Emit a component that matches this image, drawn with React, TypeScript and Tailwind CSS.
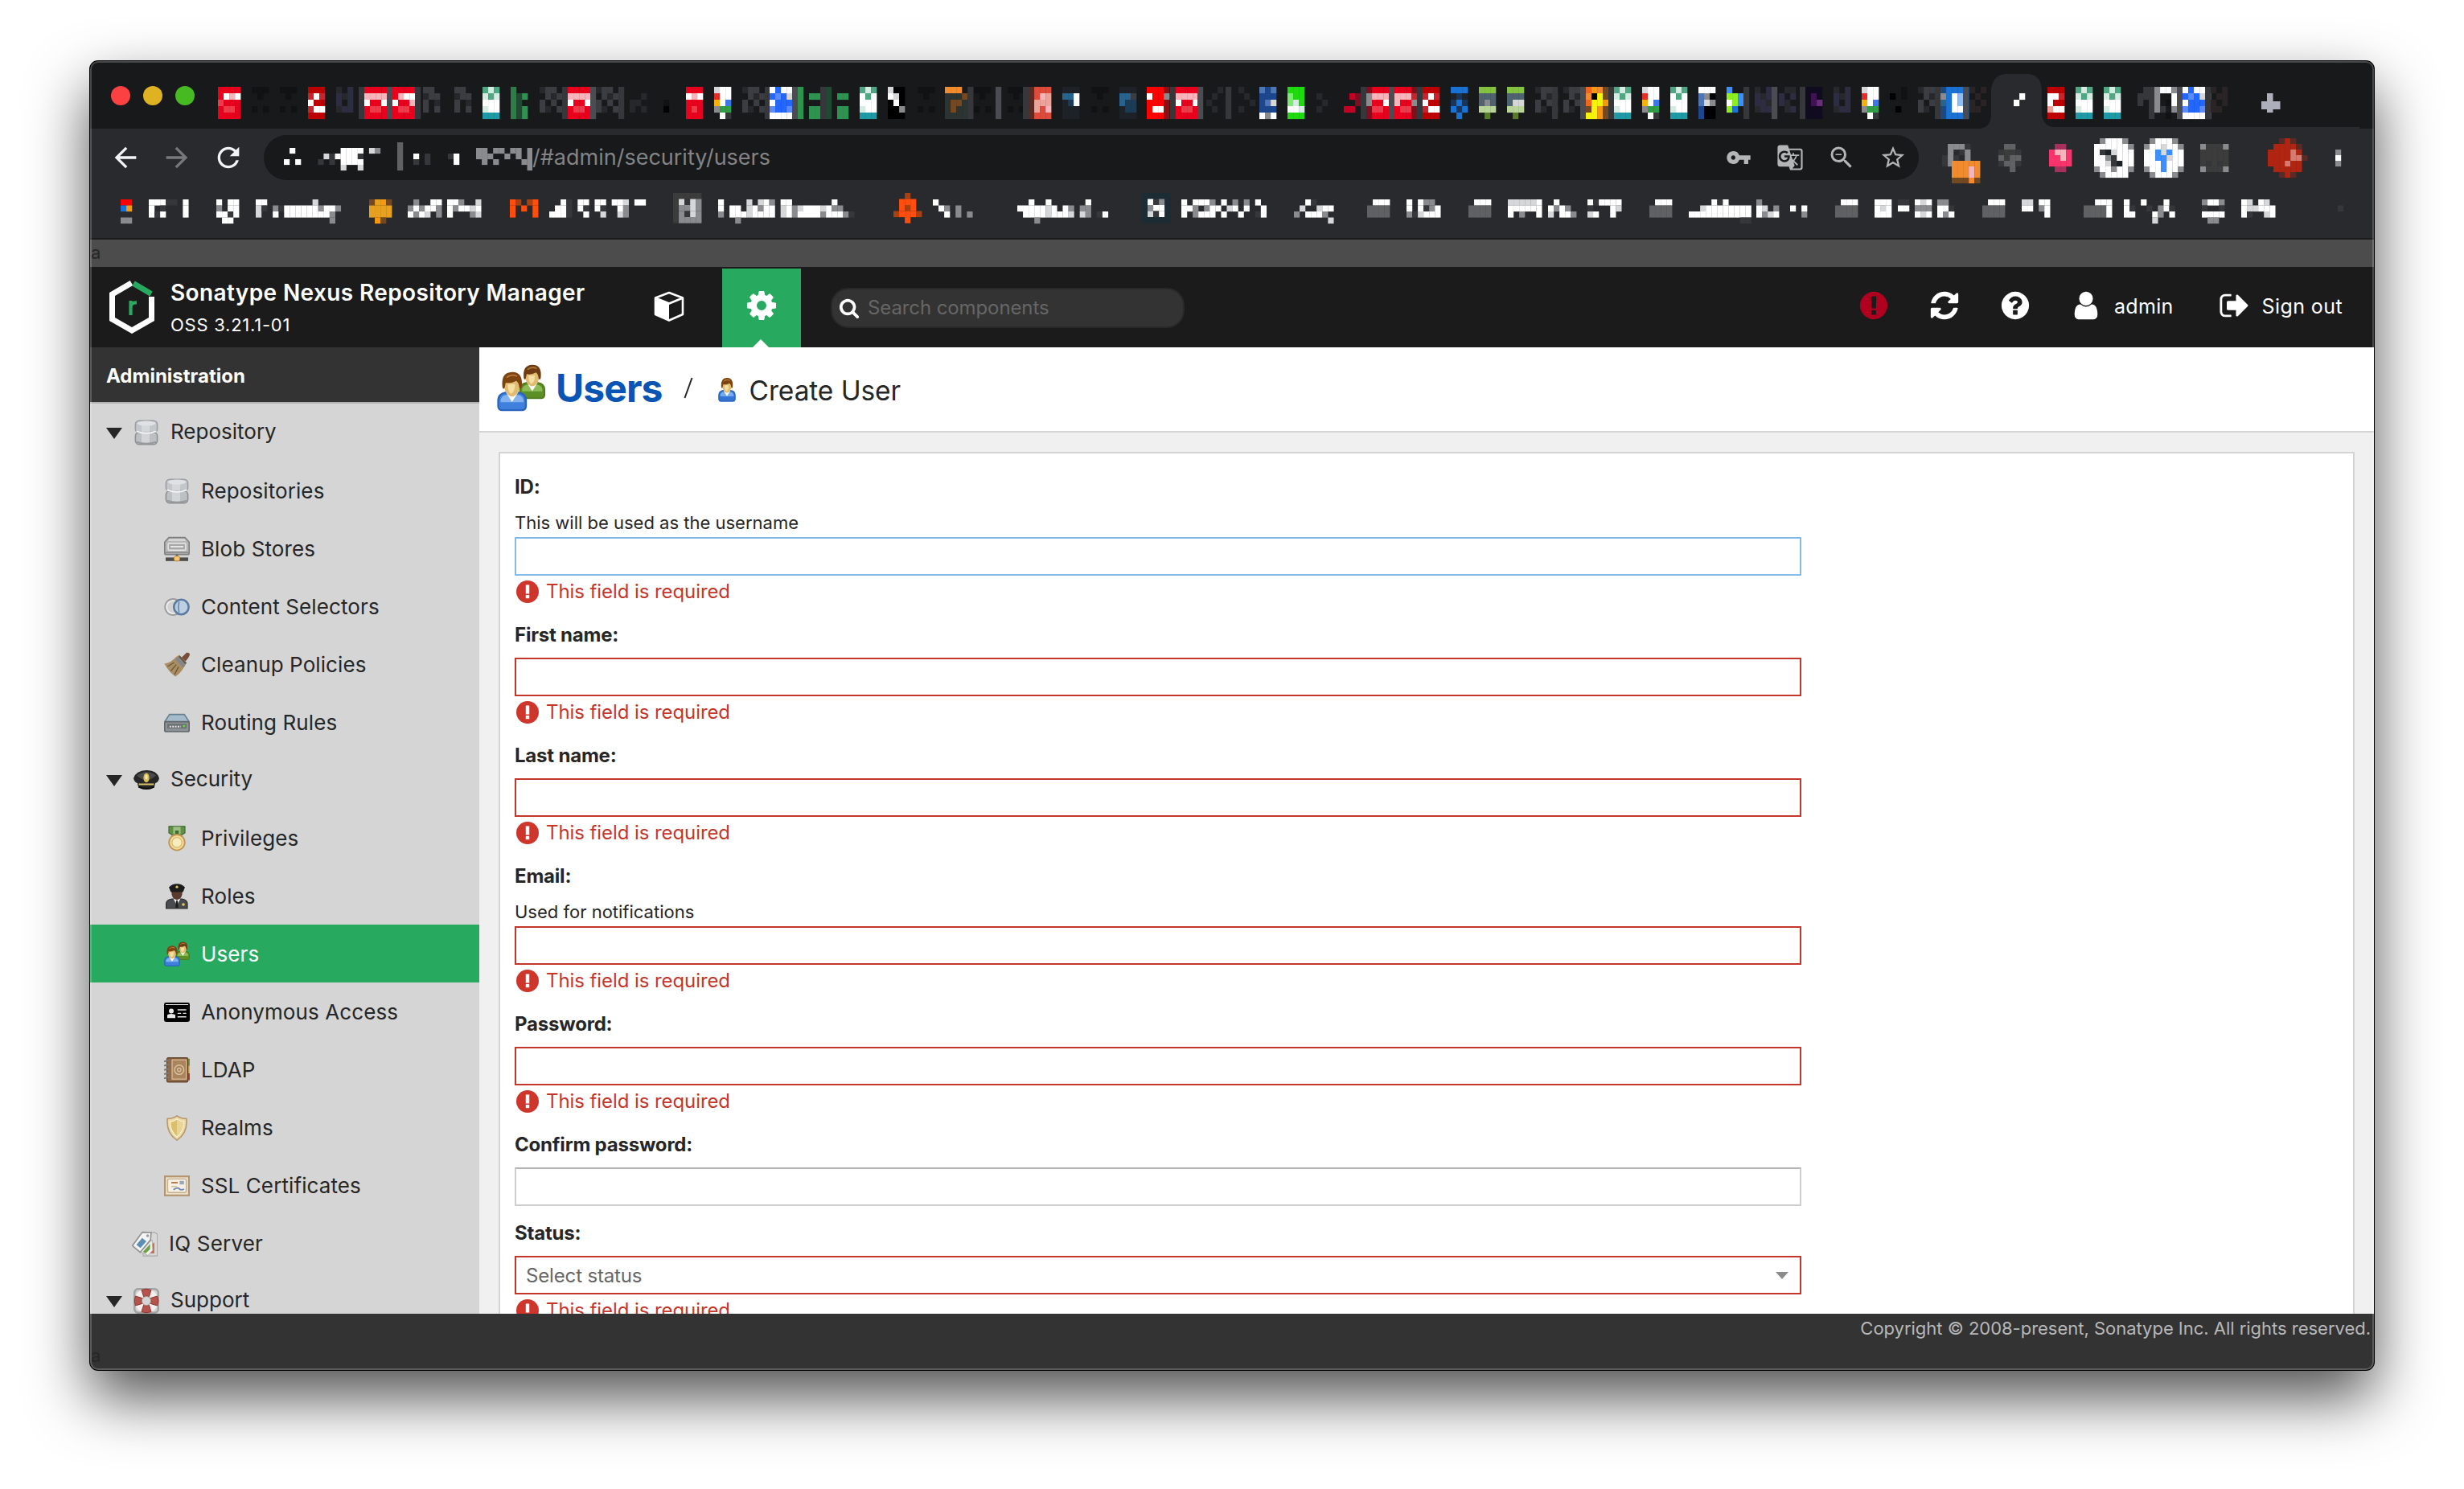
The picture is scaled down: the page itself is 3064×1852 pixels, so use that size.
import type { ReactNode } from 'react';
import {
  MdArrowBack,
  MdArrowForward,
  MdGTranslate,
  MdRefresh,
  MdStarBorder,
  MdVpnKey,
  MdZoomOut,
} from 'react-icons/md';

/* ---------- pixelated favicons, bookmarks and extensions ---------- */

const palette: Record<string, string> = {
  R: '#e8001c', P: '#f7b4ba', r: '#ed3b4c', D: '#bd0000', c: '#c9242b',
  W: '#ffffff', e: '#d6d7d9', g: '#8a8b8e', '5': '#606163', k: '#36373b',
  T: '#1e9aa6', G: '#4fa783', L: '#d5ece3', v: '#2f9350', f: '#1f4a31', i: '#2e7d46',
  h: '#3b3d42', m: '#26282b', n: '#2c2d40', s: '#4b4c52', '#': '#111213', '0': '#000000',
  x: '#e52d27', y: '#f5b20d', b: '#3b78e7', z: '#2f9e44',
  B: '#2267ff', C: '#5a8bff', O: '#f28a2e', o: '#744820', q: '#2c3432',
  a: '#df4b3a', p: '#eda39a', N: '#1d2229', u: '#27638c', t: '#1b3c54',
  F: '#ff0000', d: '#8b1014', A: '#1c478f', E: '#4f76b5', V: '#1ddb0c', l: '#7deb72',
  M: '#7d0f1e', K: '#c60025', H: '#1a72d4', I: '#17365a', j: '#83c340', S: '#4e636e',
  J: '#b9d59a', Q: '#567c2b', Y: '#f5f50a', U: '#f59a10', w: '#f0661c', X: '#110b1f',
  Z: '#3f1256', '1': '#6b2c7a', '2': '#1b4a80', '3': '#8fbcf3', '4': '#2a2424',
  '6': '#ff4d0d', '7': '#a8400f', '8': '#e8a020', '9': '#1c2c34', '@': '#3c3c3c',
  '%': '#f9336b', '&': '#a8305a', '!': '#b02511', '?': '#d87a6e', '+': '#5c2a24',
  '=': '#3b8fff', '~': '#8cf01e',
};

type Sprite = [number, number, string[]];

function Pixels({ sprites, cell }: { sprites: Sprite[]; cell: number }) {
  return (
    <>
      {sprites.map(([x, y, rows], s) =>
        rows.map((row, r) =>
          [...row].map((ch, c) =>
            palette[ch] ? (
              <rect
                key={`${s}-${r}-${c}`}
                x={x + c * 7.06}
                y={y + r * cell}
                width={7.2}
                height={cell + 0.1}
                fill={palette[ch]}
              />
            ) : null,
          ),
        ),
      )}
    </>
  );
}

const red4 = ['RRRR', 'PPPP', 'WRRW', 'RrrR', 'RRRR'];
const red3 = ['RRR', 'WPW', 'RRR', 'RrR', 'RRR'];
const dark3 = ['DDD', 'cWc', 'WDD', 'cWW', 'DDD'];
const teal = ['GLG', 'LGL', 'WWW', 'LWW', 'TTT'];
const chrome = ['eWW', 'xWW', 'yWb', 'gzz', '.Wk'];
const gray = ['hh.', 'mhh', 'h.m', 'h.h', '...'];
const gray4 = ['mhh.', '.hmh', 'h.h.', 'hm.h', '....'];
const faint = ['###', '.#.', '...', '#.#', '...'];
const navy = ['m.n', 'nmn', 'n.n', 'mnn', '...'];
const sepK = ['k', 'k', 'k', 'k', 'k'];
const sepS = ['s', 's', 's', 's', 's'];
const bars = ['..', 'vv', '..', 'vv', 'vv'];
const droid = ['jjj', 'SSS', 'SgS', 'JJJ', '.Q.'];

const at = (x: number, rows: string[]): Sprite => [x, 108, rows];

const favicons: Sprite[] = [
  at(271, ['RRRR', 'RWPW', 'rRRR', 'RrrR', 'RRRR']),
  at(313, faint), at(348, faint), at(383, dark3), at(418, navy),
  at(446, sepK), at(453, red4), at(481, sepS), at(488, ['RRRR', 'RPWW', 'WRRP', 'RrrR', 'RRRR']), at(516, sepK),
  at(526, gray), at(565, gray), at(600, teal), at(635, ['i..', 'ifv', 'if.', 'ifv', 'ifv']),
  at(671, gray4), at(699, sepK), at(706, red4), at(734, sepS), at(741, gray4), at(769, sepK),
  at(783, ['...', '..m', 'mm.', 'm.m']), at(825, ['.', '.', '#', '0']),
  at(853, red3), at(888, chrome), at(923, gray4), at(951, sepK),
  at(957, ['WBWW', 'BCBe', 'WBBB', 'CBBC', 'WWWW']), at(985, sepS), at(992, ['v', 'v', 'v', 'v', 'v']),
  at(1006, bars), at(1020, ['kf', 'kf', 'kf', 'kf', 'kf']), at(1041, bars),
  at(1069, ['GLG', 'WGW', 'WWW', 'LWW', 'TTT']), at(1104, ['e00', 'We0', '0W0', '00g', '000']),
  at(1141, faint), at(1175, ['OOO.k', 'qqqok', 'qooqk', 'qoqqk', 'qqqqk']),
  at(1211, faint), at(1238, sepS), at(1253, faint), at(1272, sepK),
  at(1279, ['+aaa', '+aPp', '+ppp', '+paP', '+aaa']),
  at(1321, ['NNN', 'uuW', 'NtW', 'NNN', 'NNN']), at(1357, faint), at(1392, ['NNN', 'uuh', 'utt', 'Ntt', 'NNN']),
  at(1426, ['FFFd', 'WFFg', 'FFFd', 'FWWd', 'FFFd']), at(1455, sepK), at(1462, red4), at(1489, sepS),
  at(1500, ['..m', '.m.', 'm..', '.m.', '...']), at(1524, sepK), at(1540, ['m..', '.m.', '..m', 'm..']),
  at(1566, ['EAE', 'AAA', 'AEe', 'AAA', 'WgW']), at(1601, ['VVV', 'lVV', 'lLV', 'WWL', 'VVV']),
  at(1637, ['...', 'm..', '.m.', 'm..']), at(1671, ['...', '.KM', '..M', 'KK.', '...']),
  at(1692, sepK), at(1699, ['MRRRR', 'gPPPP', 'gRRWR', 'MrrRR', 'MRRRR']), at(1727, sepS),
  at(1734, ['RRRM', 'PPPc', 'PRRg', 'RrrM', 'RRRM']), at(1762, sepK),
  at(1769, dark3), at(1804, ['HHH', 'NIN', 'IHI', 'HIH', '.H.']), at(1839, droid), at(1874, ['jjj', 'SSS', 'See', 'JJJ', '.Q.']),
  at(1909, gray4), at(1930, sepK), at(1944, gray4), at(1965, sepS),
  at(1972, ['wUOo', 'O0Yo', 'wYYU', 'oYUo', 'YYUo']), at(2000, sepK), at(2007, teal),
  at(2042, chrome), at(2077, ['GLG', 'WGW', 'WWW', 'LWW', 'TTT']), at(2112, ['WWW', 'Eg0', 'Eeg', 'A00', 'A00']),
  at(2147, ['=..', '~~=', 'W~=', '~H.', '...']), at(2168, sepK), at(2182, ['m.n', 'nmn', 'nnm', 'mnn']), at(2203, sepS),
  at(2212, ['.mm', 'n.n', 'nm.', '.mn']), at(2238, sepK),
  at(2245, ['XXX', 'XZX', 'XZ1', 'XXX', 'XXX']), at(2280, navy), at(2315, chrome), at(2350, ['..#', '0.#', '...', '.0.']),
  at(2385, gray4), at(2406, sepK), at(2413, ['2HHHH', 'gHW3H', 'uHW3H', '2HWWH', '2HHHH']), at(2441, sepS),
  at(2449, ['4.4', '.4.', '4.4', '44.']), at(2504, ['..', '.W', 'W.']),
  at(2546, ['DDD', 'WWc', 'WDD', 'pWW', 'DDD']), at(2581, teal), at(2616, teal), at(2658, ['.k', 'kk', 'k.']),
  at(2672, sepK), at(2679, ['gWWg', 'g..W', 'g.#W', 'gk.g', '..#.']), at(2707, sepS),
  at(2714, ['WBWWg', 'BCBeg', 'WBBBg', 'CBBCg', 'WWWWg']), at(2742, sepK), at(2749, ['4.4', '.44', '4.4', '44.']),
];

const bm = (x: number, ...rows: string[]): Sprite => [x, 248, rows];
const folder = ['.WWW', '5555', '5555'];

const bookmarks: Sprite[] = [
  bm(150, 'FF', 'HU', '', 'gg'),
  bm(185, 'WWWkk.W', 'W.k...W', 'WkW...W'),
  bm(269, 'W.WW', 'g.WW', 'WWkW', '.WW.'),
  bm(318, 'WW........e....', 'ek.gkWWWWWWgWWg', 'e..W.WWWWWWWWg.', '.............g.'),
  bm(459, 'o8Uo', '8888', '8888', '.Uo.'),
  bm(507, '.g..WW', 'gWgWWg', 'WgWe.g'), bm(556, 'WWg..e', 'WgWWeW', 'W...ge'),
  bm(634, '67.76', '6.6.6', '6...6'),
  bm(683, '..Wk.WW.WW.WWe.WW', '.WWk.Wk.Wk..Wg...', 'WWWk..W..e..eg...'),
  [837, 240, ['@@@@@', '@ekeg', '@ggeg', '@gkeg', '@gggg']],
  bm(893, 'W....e.eWg.WW.......W...', 'W.WW.eWgWW.eWgeWWWeWgg..', 'g.WWWeWWWW.eWgWWWWgWWWgk', '...g'),
  [1111, 240, ['..7..', '.666.', '.676.', '76667', '..6..']],
  bm(1160, 'W......', '.Wg.g..', '..W.g.g'),
  bm(1265, '..W..W......W...', 'WWWWWeW.Wg.gg...', '.WWWWeWWWe.eg.kW', '...g'),
  [1420, 240, ['99999', '9Wkg9', '9gWW9', '9ekW9', '99999']],
  bm(1469, 'W.WWWg.W.g.g.W..', 'WWg.gWW.eW.W..W.', 'W.gWWW.W..W..kW.'),
  bm(1609, '..Wk....', '.e..eWW.', 'g.WWWg..', '......e.'),
  bm(1700, ...folder), bm(1749, 'W.Wgg.', 'W.WkgW', 'gkeWWW'),
  bm(1826, ...folder), bm(1875, 'eeeeeW', 'WWWWWW', 'W.g..W'), bm(1925, '.W...', 'WgWg.', 'e.WWg'), bm(1974, 'WkWWWW', 'k...We', 'eW..W.'),
  bm(2051, ...folder), bm(2100, '....WkW....', '..eWWWWWWWW', 'WWWWWWWWWWW', '.........kk'), bm(2184, 'g...', 'We.g', 'WgeW'), bm(2226, '...', 'W.W', '..g'),
  bm(2282, ...folder), bm(2331, 'WWW', 'WeW', 'WWW'), bm(2360, 'kk', 'WW', ''), bm(2381, 'WeW', 'ggg', 'WeW'), bm(2409, 'gg.', 'WWk', 'WgW'),
  bm(2465, ...folder), bm(2514, 'ee.WW', 'WW.gW', '....W'),
  bm(2591, '..WWW', '5555W', '5555W'), bm(2641, 'W..W...W.', 'Wk..k.gWk', 'WW...Wg.W', '.....e...'),
  bm(2738, 'gWWg', 'k..k', 'WWWW', '.gg.'), bm(2787, 'We.We.', 'WeeWWW', 'Wk..eW'), bm(2907, '.', 'k'),
];

const extensions: Sprite[] = [
  [2415, 179, ['.gggk', '.g.kg', 'kgk.g', 'kg']],
  [2427, 200, ['OOOOO', 'OOOPO', 'OOOPO', 'oooOo']],
  [2485, 179, ['.55.', 'k@@k', '5@55', 'k55k', '..5.']],
  [2548, 179, ['.&&.', '%PP%', '%%P%', '%%%%', '.&&.']],
  [2604, 172, ['.gWWWg.', 'WWWWWWg', 'WkNeWWW', 'WWgkWWW', 'WWekNWW', 'gWWgWWg', '.gWWWW.']],
  [2666, 172, ['.gWWWg.', 'gWWeWWg', 'WW=e=WW', 'WW==eWW', 'WWW=WWW', 'gWW=WWg', '.gWWWg.']],
  [2736, 179, ['g@@@g', '@@@@@', '@@@@@', '@k@k@', 'g@@@g']],
  [2820, 172, ['..+!+..', '.!!!!+.', '!!!!?!.', '!!!!??+', '!!!?!!.', '.!!!!!.', '..+!+..']],
  [2904, 186, ['g', 'W', 'g']],
];

const address: Sprite[] = [
  [353, 184, ['.W........WWWW.eg', '.......ekWWWWk']],
  [353, 198, ['W.W...k.k.WWWW.', '..........e..e.']],
  [494, 177, ['5', '5', '5', '5', '5']],
  [514, 191, ['W.k', 'k.k']],
  [557, 191, ['kW', '.W']],
  [592, 184, ['gg.gg.gg.g', 'ggg..g.g.g', '.g.g....gg', '.........g']],
];

/* ---------- icons ---------- */

const glyphs = {
  cog: 'M1024 896q0-106-75-181t-181-75-181 75-75 181 75 181 181 75 181-75 75-181zm512-109v222q0 12-8 23t-20 13l-185 28q-19 54-39 91 35 50 107 138 10 12 10 25t-9 23q-27 37-99 108t-94 71q-12 0-26-9l-138-108q-44 23-91 38-16 136-29 186-7 28-36 28h-222q-14 0-24.5-8.5t-11.5-21.5l-28-184q-49-16-90-37l-141 107q-10 9-25 9-14 0-25-11-126-114-165-168-7-10-7-23 0-12 8-23 15-21 51-66.5t54-70.5q-27-50-41-99l-183-27q-13-2-21-12.5t-8-23.5v-222q0-12 8-23t19-13l186-28q14-46 39-92-40-57-107-138-10-12-10-24 0-10 9-23 26-36 98.5-107.5t94.5-71.5q13 0 26 10l138 107q44-23 91-38 16-136 29-186 7-28 36-28h222q14 0 24.5 8.5t11.5 21.5l28 184q49 16 90 37l142-107q9-9 24-9 13 0 25 10 129 119 165 170 7 8 7 22 0 12-8 23-15 21-51 66.5t-54 70.5q26 50 41 98l183 28q13 2 21 12.5t8 23.5z',
  refresh: 'M1639 1056q0 5-1 7-64 268-268 434.5t-478 166.5q-146 0-282.5-55t-243.5-157l-129 129q-19 19-45 19t-45-19-19-45v-448q0-26 19-45t45-19h448q26 0 45 19t19 45-19 45l-137 137q71 66 161 102t187 36q134 0 250-65t186-179q11-17 53-117 8-23 30-23h192q13 0 22.5 9.5t9.5 22.5zm25-800v448q0 26-19 45t-45 19h-448q-26 0-45-19t-19-45 19-45l138-138q-148-137-349-137-134 0-250 65t-186 179q-11 17-53 117-8 23-30 23h-199q-13 0-22.5-9.5t-9.5-22.5v-7q65-268 270-434.5t480-166.5q146 0 284 55.5t245 156.5l130-129q19-19 45-19t45 19 19 45z',
  help: 'M1024 1376v-192q0-14-9-23t-23-9h-192q-14 0-23 9t-9 23v192q0 14 9 23t23 9h192q14 0 23-9t9-23zm256-672q0-88-55.5-163t-138.5-116-170-41q-243 0-371 213-15 24 8 42l132 100q7 6 19 6 16 0 25-12 53-68 86-92 34-24 86-24 48 0 85.5 26t37.5 59q0 38-20 61t-68 45q-63 28-115.5 86.5t-52.5 125.5v36q0 14 9 23t23 9h192q14 0 23-9t9-23q0-19 21.5-49.5t54.5-49.5q32-18 49-28.5t46-35 44.5-48 28-60.5 12.5-81zm384 192q0 209-103 385.5t-279.5 279.5-385.5 103-385.5-103-279.5-279.5-103-385.5 103-385.5 279.5-279.5 385.5-103 385.5 103 279.5 279.5 103 385.5z',
  alert: 'M896 128q209 0 385.5 103t279.5 279.5 103 385.5-103 385.5-279.5 279.5-385.5 103-385.5-103-279.5-279.5-103-385.5 103-385.5 279.5-279.5 385.5-103zm128 1247v-190q0-14-9-23.5t-22-9.5h-192q-13 0-23 10t-10 23v190q0 13 10 23t23 10h192q13 0 22-9.5t9-23.5zm-2-344l18-621q0-12-10-18-10-8-24-8h-220q-14 0-24 8-10 6-10 18l17 621q0 10 10 17.5t24 7.5h185q14 0 23.5-7.5t10.5-17.5z',
  user: 'M1536 1399q0 109-62.5 187t-150.5 78h-854q-88 0-150.5-78t-62.5-187q0-85 8.5-160.5t31.5-152 58.5-131 94-89 134.5-34.5q131 128 313 128t313-128q76 0 134.5 34.5t94 89 58.5 131 31.5 152 8.5 160.5zm-256-887q0 159-112.5 271.5t-271.5 112.5-271.5-112.5-112.5-271.5 112.5-271.5 271.5-112.5 271.5 112.5 112.5 271.5z',
  signOut: 'M704 1440q0 4 1 20t.5 26.5-3 23.5-10 19.5-20.5 6.5h-320q-119 0-203.5-84.5t-84.5-203.5v-704q0-119 84.5-203.5t203.5-84.5h320q13 0 22.5 9.5t9.5 22.5q0 4 1 20t.5 26.5-3 23.5-10 19.5-20.5 6.5h-320q-66 0-113 47t-47 113v704q0 66 47 113t113 47h312l11.5 1 11.5 3 8 5.5 7 9 2 13.5zm928-544q0 26-19 45l-544 544q-19 19-45 19t-45-19-19-45v-288h-448q-26 0-45-19t-19-45v-384q0-26 19-45t45-19h448v-288q0-26 19-45t45-19 45 19l544 544q19 19 19 45z',
  search: 'M1216 832q0-185-131.5-316.5t-316.5-131.5-316.5 131.5-131.5 316.5 131.5 316.5 316.5 131.5 316.5-131.5 131.5-316.5zm512 832q0 52-38 90t-90 38q-54 0-90-38l-343-342q-179 124-399 124-143 0-273.5-55.5t-225-150-150-225-55.5-273.5 55.5-273.5 150-225 225-150 273.5-55.5 273.5 55.5 225 150 150 225 55.5 273.5q0 220-124 399l343 343q37 37 37 90z',
};

function Glyph({ name, className, box = '0 0 1792 1792' }: { name: keyof typeof glyphs; className: string; box?: string }) {
  return (
    <svg viewBox={box} className={`shrink-0 ${className}`} fill="currentColor">
      <path d={glyphs[name]} />
    </svg>
  );
}

function Logo() {
  return (
    <svg viewBox="0 0 58 66" className="h-[66px] w-[58px] shrink-0">
      <path d="M28.500 3 4.500 17V48L29 62 53.500 48V20" fill="none" stroke="#fff" strokeWidth="7" />
      <path d="M31 3.500 53 16.500" stroke="#28a960" strokeWidth="7" />
      <path d="M27.500 43V25M27.500 32Q28.500 27 35 27.500" fill="none" stroke="#28a960" strokeWidth="4.200" />
    </svg>
  );
}

function Cube() {
  return (
    <svg viewBox="0 0 38 38" className="h-[38px] w-[38px] shrink-0">
      <path d="M19 2 36 8.500V29L19 36.500 2 29V8.500z" fill="none" stroke="#fff" strokeWidth="2.600" strokeLinejoin="round" />
      <path d="M2 9 19 15.500V36.500L2 29z" fill="#fff" />
      <path d="M3 9 19 15.500 35 9" fill="none" stroke="#fff" strokeWidth="2.600" />
    </svg>
  );
}

function Person({ x, y, dark, shirt, light, edge }: { x: number; y: number; dark: string; shirt: string; light: string; edge: string }) {
  return (
    <g transform={`translate(${x} ${y})`}>
      <path d="M.4 11.400V9.300Q.5 7.200 2.800 6.800H7.200Q9.500 7.200 9.600 9.300V11.400Q9.500 12.600 8.400 12.600H1.600Q.5 12.600.4 11.400z" fill={shirt} stroke={edge} strokeWidth=".6" />
      <path d="M1.200 9.300Q1.400 7.900 2.900 7.600H7.100Q8.600 7.900 8.800 9.300V10H1.200z" fill={light} />
      <path d="M3 6.800H7L5 9.900z" fill="#fff" />
      <path d="M2.400 3.500Q2.300 7.700 5 8.100 7.700 7.700 7.600 3.500 5 1.500 2.400 3.500z" fill="#e2bb72" />
      <path d="M3.600 4Q3.600 6.800 4.700 7.200 6 6.500 6 4z" fill="#f6dfa4" />
      <path d="M1.800 5Q1.200.1 5 0T8.200 5Q7.900 5.900 7.400 5.200 7.300 3.500 6.400 2.900 4.500 3.900 2.900 3.500L2.500 5.400Q2 5.800 1.800 5z" fill={dark} />
      <path d="M3.200 1.800Q4.800.5 6.700 1.400" stroke="#b27b3e" strokeWidth=".5" fill="none" />
    </g>
  );
}

function UsersIcon({ className }: { className: string }) {
  return (
    <svg viewBox="0 0 16 16" className={`shrink-0 ${className}`}>
      <g transform="translate(7.300 .2) scale(.88)">
        <Person x={0} y={0} dark="#6e3c10" shirt="#5d8f28" light="#8dbb55" edge="#4f7d1d" />
      </g>
      <Person x={0} y={2.600} dark="#7d440f" shirt="#3f80dc" light="#82b2f0" edge="#2763bf" />
    </svg>
  );
}

function UserIcon({ className }: { className: string }) {
  return (
    <svg viewBox="0 0 10 13" preserveAspectRatio="none" className={`shrink-0 ${className}`}>
      <Person x={0} y={0} dark="#7d440f" shirt="#3474d4" light="#77abf0" edge="#2763bf" />
    </svg>
  );
}

function Svg16({ children }: { children: ReactNode }) {
  return (
    <svg viewBox="0 0 16 16" className="h-8 w-8 shrink-0">
      {children}
    </svg>
  );
}

const DatabaseIcon = () => (
  <Svg16>
    <rect x="1.200" y=".6" width="13.600" height="7.600" rx="2.400" fill="#c3c7cb" stroke="#9a9ea2" strokeWidth=".8" />
    <rect x="1.200" y="7.800" width="13.600" height="7.600" rx="2.400" fill="#bcc0c5" stroke="#8d9093" strokeWidth=".8" />
    <rect x="5" y="1" width="5" height="14" fill="#dfe2e5" opacity=".6" />
    <ellipse cx="8" cy="2.300" rx="5.700" ry="1.500" fill="#dfe1e4" />
    <path d="M1.800 7.200Q8 9.700 14.200 7.200" fill="none" stroke="#f3f4f5" strokeWidth=".9" />
    <path d="M1.800 13.800Q8 16 14.200 13.800" fill="none" stroke="#97999c" strokeWidth="1" />
  </Svg16>
);

const BlobIcon = () => (
  <Svg16>
    <path d="M3 .8H13L15.600 3.600V10.500Q15.600 11.400 14.700 11.400H1.300Q.4 11.400.4 10.500V3.600z" fill="#b7b7b7" stroke="#7f7f7f" strokeWidth=".8" />
    <path d="M3.300 1.500H12.700L13.700 3H2.300z" fill="#d5d5d5" />
    <rect x="2.600" y="4.400" width="10.800" height="4.200" rx=".6" fill="#a8a8a8" stroke="#e9e9e9" strokeWidth=".7" />
    <rect x="4" y="6" width="8" height=".9" fill="#e9e9e9" />
    <path d="M1 10.200H15" stroke="#8a8a8a" strokeWidth=".9" />
    <rect x="7.300" y="11.400" width="1.400" height="2" fill="#5e5e5e" />
    <rect x="1" y="13.200" width="14" height="2.200" fill="#4d4d4d" />
    <rect x="6.300" y="12.400" width="3.400" height="3" rx="1" fill="#f3c878" stroke="#c58a34" strokeWidth=".5" />
  </Svg16>
);

const SelectorIcon = () => (
  <Svg16>
    <circle cx="5.600" cy="8" r="5" fill="#d3d3d3" stroke="#9c9c9c" strokeWidth=".9" />
    <circle cx="5.600" cy="8" r="4" fill="none" stroke="#efefef" strokeWidth=".8" />
    <circle cx="10.700" cy="8" r="4.600" fill="#bcd0e2" stroke="#5b7ba3" strokeWidth="1.300" />
    <path d="M9.300 4.700Q8.500 8 9.300 11.300" fill="none" stroke="#6d8cb0" strokeWidth=".9" />
  </Svg16>
);

const BroomIcon = () => (
  <Svg16>
    <path d="M10.800 3.500 14 .4Q15.800 0 16 1.500 15.800 3 13.300 5.800z" fill="#7b4a38" />
    <path d="M9.500 1.800 14 6.800 12.300 9.600Q10 13.500 7 15.200 3 12.500.2 7.300 4.500 6.500 7.200 3.200z" fill="#a98e63" />
    <path d="M7.700 3.800 12.500 9" stroke="#7e8792" strokeWidth="1.900" />
    <path d="M9.400 2.600 13.600 7.200" stroke="#5f5a52" strokeWidth="1.200" />
    <path d="M6.300 6.500 2.200 9M7.600 7.800 4.200 11.800M9 9.200 6.500 14" stroke="#6b5938" strokeWidth=".7" />
  </Svg16>
);

const RouterIcon = () => (
  <Svg16>
    <path d="M3.400 2.800H12.600L15.600 7.400H.4z" fill="#a4bccb" stroke="#67808f" strokeWidth=".8" />
    <rect x=".4" y="7.300" width="15.200" height="6.200" rx=".9" fill="#8d9396" stroke="#5f6568" strokeWidth=".8" />
    <rect x="2" y="8.600" width="12" height="3" fill="#6d7275" />
    <path d="M3.400 10.400H10.500" stroke="#e3e5e6" strokeWidth="1" strokeDasharray="1 .7" />
    <circle cx="12.400" cy="10" r=".8" fill="#6fd23c" />
  </Svg16>
);

const CapIcon = () => (
  <Svg16>
    <path d="M0 7Q1.500 2.200 8 2T16 7Q15.500 9.400 13.600 10L12.900 12.800Q8 15.200 3.100 12.800L2.400 10Q.5 9.400 0 7z" fill="#262626" />
    <path d="M2 5.200Q5 3.200 8 3.100T14 5.200Q11 8 8 8T2 5.200z" fill="#4b4b4b" />
    <path d="M3.200 10.200H12.800L12.600 11.200H3.400z" fill="#d9c36b" />
    <ellipse cx="8" cy="6.700" rx="1.800" ry="2.900" fill="#d8bd55" />
    <ellipse cx="8" cy="6.300" rx=".8" ry="1.500" fill="#f4e7a3" />
    <path d="M3.300 12.300Q8 14.800 12.700 12.300" stroke="#0d0d0d" strokeWidth="1" fill="none" />
  </Svg16>
);

const MedalIcon = () => (
  <Svg16>
    <path d="M3 .4H13V4.500L10 6.300H6L3 4.500z" fill="#5f8f48" stroke="#3f6b2e" strokeWidth=".6" />
    <rect x="5.700" y=".7" width="4.600" height="4.300" fill="#9cc07e" />
    <rect x="6.900" y="3" width="2.200" height="2.400" fill="#3f6b2e" />
    <circle cx="8" cy="10.400" r="4.900" fill="#f1dc9a" stroke="#bf9553" strokeWidth=".9" />
    <circle cx="8" cy="10.400" r="3.100" fill="#f8ecbd" stroke="#dabd75" strokeWidth=".7" />
  </Svg16>
);

const OfficerIcon = () => (
  <Svg16>
    <path d="M1.300 15.400V12.300Q1.600 10 5 9.500H11Q14.200 10 14.500 12.300V15.400z" fill="#4a4b4e" stroke="#2c2c2e" strokeWidth=".6" />
    <path d="M5.800 9.400H10.200L8 13.500z" fill="#f2f2f2" />
    <path d="M7.500 10.600H8.500L8.900 15H7.100z" fill="#1d1d1d" />
    <path d="M4.600 4.500H11.400Q11.500 9.800 8 10.200 4.500 9.800 4.600 4.500z" fill="#5a3b2d" />
    <path d="M3 2.300Q5 .1 8 .1T13 2.300L11.800 5.300H4.200z" fill="#1c1c1c" />
    <circle cx="8" cy="2.100" r=".8" fill="#e6ca57" />
    <circle cx="12" cy="13" r=".9" fill="#e6ca57" />
  </Svg16>
);

const CardIcon = () => (
  <Svg16>
    <rect x="0" y="2" width="16" height="12" rx="1.200" fill="#000" />
    <rect x="1" y="3" width="14" height=".5" fill="#ddd" />
    <circle cx="4.500" cy="7.200" r="1.500" fill="#e8e8e8" />
    <path d="M2 11.600V9.800Q2.400 9 4.500 9T7 9.800V11.600z" fill="#e8e8e8" />
    <path d="M8.400 6.500H13.800M8.400 8.700H10.600M11.800 8.700H13.800M8.400 10.900H13.800" stroke="#e8e8e8" strokeWidth=".7" />
  </Svg16>
);

const BookIcon = () => (
  <Svg16>
    <rect x="12" y=".9" width="4" height="4.500" fill="#6f9d3a" />
    <rect x="12" y="5.400" width="4" height="4.600" fill="#e5b54b" />
    <rect x="12" y="10" width="4" height="4.300" fill="#b43f2c" />
    <rect x="1.800" y=".4" width="13" height="15" rx=".8" fill="#8f6b49" stroke="#65462c" strokeWidth=".7" />
    <rect x="5" y="1.600" width="8.800" height="12" fill="#a9845d" stroke="#ddc19d" strokeWidth=".6" />
    <circle cx="9.400" cy="7.800" r="2.900" fill="none" stroke="#dcc5a3" strokeWidth=".7" />
    <circle cx="9.400" cy="7.800" r="1.100" fill="none" stroke="#dcc5a3" strokeWidth=".6" />
    <path d="M0 2.700 3 1.900M0 5.300 3 4.500M0 7.900 3 7.100M0 10.500 3 9.700M0 13.100 3 12.300" stroke="#7a7a7a" strokeWidth="1" />
  </Svg16>
);

const ShieldIcon = () => (
  <Svg16>
    <path d="M8 .4Q10.500 2.200 13.900 2.200 14.800 11 8 15.600 1.200 11 2.100 2.200 5.500 2.200 8 .4z" fill="#ecd9a6" stroke="#b7996b" strokeWidth=".8" />
    <path d="M8 2.500Q10 3.900 12.200 4 12.400 10 8 13.500 3.600 10 3.800 4 6 3.900 8 2.500z" fill="#dcbf6c" stroke="#f8efd2" strokeWidth=".7" />
    <path d="M8 3Q10 4.200 11.800 4.300 12 9.700 8 13z" fill="#e9d493" />
  </Svg16>
);

const CertificateIcon = () => (
  <Svg16>
    <rect x=".5" y="2.100" width="15" height="11.800" fill="#ece2cd" stroke="#b39670" strokeWidth="1.100" />
    <rect x="2.200" y="3.700" width="11.600" height="8.400" rx="1" fill="#f5f0e3" stroke="#c4b08e" strokeWidth=".7" />
    <path d="M4.500 6H8.500" stroke="#a8622f" strokeWidth=".8" />
    <rect x="9.700" y="4.900" width="2.700" height="2.200" fill="#9aa8bb" />
    <path d="M4.500 8.400H8" stroke="#c3b294" strokeWidth=".6" />
    <path d="M5.800 10.400Q8.500 8.600 9.500 9.800T12.500 10" fill="none" stroke="#6f86b4" strokeWidth=".9" />
  </Svg16>
);

const TagsIcon = () => (
  <Svg16>
    <path d="M7 2 14 .8 15.800 2V15.600H7z" fill="#d8d8d8" stroke="#aaa" strokeWidth=".6" />
    <path d="M11.500 9.500 14 7V14H11z" fill="#c87053" />
    <path d="M5.500 13 12.500 5.500 13 12 10 15.300z" fill="#f0f0f0" stroke="#aaa" strokeWidth=".5" />
    <path d="M6.800 13 11.500 8 11.200 11.500 8.500 14z" fill="#6da24b" />
    <path d="M.3 9.200 6.500.8 12 1 11.600 5.500 5.200 13.300z" fill="#f4f4f4" stroke="#909090" strokeWidth=".8" />
    <path d="M2.800 8.600 6.400 4.400 9 6.500 5.300 10.600z" fill="#5b8fb5" />
    <circle cx="9.800" cy="3" r=".9" fill="#9d9d9d" />
  </Svg16>
);

const LifebuoyIcon = () => (
  <Svg16>
    <rect x=".6" y=".6" width="14.800" height="14.800" rx="2.500" fill="none" stroke="#a3a3a3" strokeWidth="1.300" />
    <circle cx="8" cy="8" r="5.200" fill="none" stroke="#f2efee" strokeWidth="4.400" />
    <path d="M5 1.200Q8 0 11 1.200L9.700 5.400Q8 4.700 6.300 5.400zM5 14.800Q8 16 11 14.800L9.700 10.600Q8 11.300 6.300 10.600zM1.200 5Q0 8 1.200 11L5.400 9.700Q4.700 8 5.400 6.300zM14.800 5Q16 8 14.800 11L10.600 9.700Q11.300 8 10.600 6.300z" fill="#b5534d" stroke="#8f3530" strokeWidth=".5" />
    <circle cx="8" cy="8" r="2.800" fill="#d5d5d5" stroke="#a58f8d" strokeWidth=".5" />
  </Svg16>
);

/* ---------- browser chrome ---------- */

function TabStrip() {
  return (
    <div className="flex h-[84px] shrink-0 items-center bg-[#18191b]">
      <div className="flex w-[150px] shrink-0 gap-4 pt-[2px] pl-[26px]">
        <span className="h-6 w-6 rounded-full bg-[#fc4142]" />
        <span className="h-6 w-6 rounded-full bg-[#deb222]" />
        <span className="h-6 w-6 rounded-full bg-[#47b921]" />
      </div>
      <svg viewBox="262 76 2690 84" className="h-[84px] w-[2690px] shrink-0">
        <path d="M2462 160Q2476 158 2476 142V112Q2478 92 2496 92H2520Q2539 92 2539 114V142Q2541 158 2554 158H2934V160z" fill="#292a2d" />
        <Pixels sprites={favicons} cell={8} />
        <path d="M2819 116h7.500v10h9v10h-9v4h-7.500v-4h-7v-10h7z" fill="#adb0ba" />
      </svg>
    </div>
  );
}

function Toolbar() {
  return (
    <div className="flex h-[72px] shrink-0 items-center bg-[#292a2d] pl-6 text-[#f1f3f4]">
      <MdArrowBack className="h-10 w-10" />
      <MdArrowForward className="ml-6 h-10 w-10 text-[#77787b]" />
      <MdRefresh className="ml-6 h-10 w-10" />
      <div className="ml-[24px] flex h-14 w-[2058px] shrink-0 items-center rounded-full bg-[#18191b]">
        <svg viewBox="328 168 334 56" className="h-14 w-[334px] shrink-0">
          <Pixels sprites={address} cell={7} />
        </svg>
        <span className="w-[1478px] pt-px font-[Inter,sans-serif] text-[27px] whitespace-nowrap text-[#828487]">/#admin/security/users</span>
        <div className="flex items-center text-[#b4b5b7]">
          <MdVpnKey className="ml-[6px] h-8 w-8" />
          <MdGTranslate className="ml-[31px] h-[34px] w-[34px]" />
          <MdZoomOut className="ml-[29px] h-9 w-9" />
          <MdStarBorder className="ml-[29px] h-[34px] w-[34px]" />
        </div>
      </div>
      <svg viewBox="2386 160 566 72" className="h-[72px] w-[566px] shrink-0">
        <Pixels sprites={extensions} cell={7} />
      </svg>
    </div>
  );
}

function BookmarksBar() {
  return (
    <div className="h-[66px] shrink-0 border-b-2 border-[#1c1c1e] bg-[#292a2d]">
      <svg viewBox="112 232 2840 64" className="h-16 w-[2840px]">
        <Pixels sprites={bookmarks} cell={7.5} />
      </svg>
    </div>
  );
}

/* ---------- application ---------- */

function AppHeader() {
  return (
    <header className="flex h-[100px] shrink-0 items-start bg-[#1b1b1b] text-white">
      <div className="flex w-[680px] shrink-0 pl-[23px]">
        <div className="pt-[17px]">
          <Logo />
        </div>
        <div className="pt-[14px] pl-[19px] whitespace-nowrap">
          <div className="text-[28px] leading-[36px] font-semibold tracking-[0.38px]">Sonatype Nexus Repository Manager</div>
          <div className="pt-1 text-[22px] leading-[36px] tracking-[0.75px]">OSS 3.21.1-01</div>
        </div>
      </div>
      <div className="flex w-[106px] shrink-0 pt-[30px] pl-[21px]">
        <Cube />
      </div>
      <div className="relative mt-[2px] flex h-[98px] w-[98px] shrink-0 justify-center bg-[#28a960] pt-[28px]">
        <Glyph name="cog" box="0 128 1536 1536" className="h-9 w-9" />
        <span className="absolute bottom-0 left-[38px] border-x-10 border-b-10 border-x-transparent border-b-white" />
      </div>
      <div className="mt-[26px] ml-[37px] flex h-[50px] w-[440px] items-center rounded-[22px] border-2 border-[#292929] bg-[#333]">
        <Glyph name="search" className="ml-[8px] h-[26px] w-[26px]" />
        <span className="pl-[10px] text-[24px] tracking-[-0.1px] whitespace-nowrap text-[#666]">Search components</span>
      </div>
      <div className="flex h-[96px] flex-1 items-center justify-end pr-[39px] text-[25px] whitespace-nowrap">
        <Glyph name="alert" className="h-10 w-10 text-[#b00020]" />
        <Glyph name="refresh" className="ml-12 h-10 w-10" />
        <Glyph name="help" className="ml-12 h-10 w-10" />
        <Glyph name="user" className="ml-12 h-10 w-10" />
        <span className="mt-1 ml-[15px] tracking-[0.3px]">admin</span>
        <Glyph name="signOut" className="ml-[56px] h-10 w-10" />
        <span className="mt-1 ml-[14px] tracking-[0.4px]">Sign out</span>
      </div>
    </header>
  );
}

function Group({ icon, label }: { icon: ReactNode; label: string }) {
  return (
    <div className="flex h-[72px] shrink-0 pl-5">
      <span className="mt-[30px] h-0 w-0 border-x-10 border-t-14 border-x-transparent border-t-[#262626]" />
      <span className="mt-5 ml-[14px]">{icon}</span>
      <span className="ml-[14px] leading-[70px]">{label}</span>
    </div>
  );
}

function Item({ icon, label, active = false }: { icon: ReactNode; label: string; active?: boolean }) {
  return (
    <div className={`flex h-[72px] shrink-0 pl-[92px] ${active ? 'bg-[#28a960] text-white' : ''}`}>
      <span className="mt-[21px]">{icon}</span>
      <span className="ml-[14px] leading-[74px] tracking-[0.1px]">{label}</span>
    </div>
  );
}

function Sidebar() {
  return (
    <aside className="flex w-[484px] shrink-0 flex-col overflow-hidden bg-[#d5d5d5] text-[26px] whitespace-nowrap text-[#262626]">
      <div className="h-[70px] shrink-0 border-b-2 border-[#b3b3b3] bg-[#333] pl-5 text-[24px] leading-[72px] font-bold text-white">
        Administration
      </div>
      <Group icon={<DatabaseIcon />} label="Repository" />
      <Item icon={<DatabaseIcon />} label="Repositories" />
      <Item icon={<BlobIcon />} label="Blob Stores" />
      <Item icon={<SelectorIcon />} label="Content Selectors" />
      <Item icon={<BroomIcon />} label="Cleanup Policies" />
      <Item icon={<RouterIcon />} label="Routing Rules" />
      <Group icon={<CapIcon />} label="Security" />
      <Item icon={<MedalIcon />} label="Privileges" />
      <Item icon={<OfficerIcon />} label="Roles" />
      <Item icon={<UsersIcon className="h-8 w-8" />} label="Users" active />
      <Item icon={<CardIcon />} label="Anonymous Access" />
      <Item icon={<BookIcon />} label="LDAP" />
      <Item icon={<ShieldIcon />} label="Realms" />
      <Item icon={<CertificateIcon />} label="SSL Certificates" />
      <div className="flex h-[72px] shrink-0 pl-[52px]">
        <span className="mt-[21px]">
          <TagsIcon />
        </span>
        <span className="ml-[14px] leading-[74px] tracking-[0.2px]">IQ Server</span>
      </div>
      <Group icon={<LifebuoyIcon />} label="Support" />
    </aside>
  );
}

function FieldError() {
  return (
    <div className="flex h-[38px] items-center text-[24px] tracking-[-0.08px] text-[#c5362a]">
      <svg viewBox="0 0 28 28" className="mt-[2px] mr-[9px] ml-[2px] h-7 w-7">
        <circle cx="14" cy="14" r="14" fill="#cf362b" />
        <rect x="11.800" y="5.500" width="4.400" height="11" fill="#fff" />
        <rect x="11.800" y="18" width="4.400" height="4.200" fill="#fff" />
      </svg>
      <span className="leading-[38px] pt-[2px]">This field is required</span>
    </div>
  );
}

type FieldProps = { label: string; help?: string; border: string; error?: boolean; children?: ReactNode };

function Field({ label, help, border, error = true, children }: FieldProps) {
  return (
    <div className="w-[1600px] shrink-0">
      <div className="h-[55px] pt-[16px] text-[24px] leading-[40px] font-bold tracking-[-0.2px]">{label}</div>
      {help ? <div className="h-[43px] pt-[7px] text-[22px] leading-[36px]">{help}</div> : <div className="h-[9px]" />}
      <div className={`flex h-12 items-center justify-between border-2 bg-white ${border}`}>{children}</div>
      {error && <FieldError />}
    </div>
  );
}

function CreateUserForm() {
  return (
    <div className="flex w-[2308px] flex-1 flex-col overflow-hidden border-x-2 border-t-2 border-[#d4d4d4] bg-white pt-[6px] pl-[18px] whitespace-nowrap">
      <Field label="ID:" help="This will be used as the username" border="border-[#84bae6]" />
      <Field label="First name:" border="border-[#c5362a]" />
      <Field label="Last name:" border="border-[#c5362a]" />
      <Field label="Email:" help="Used for notifications" border="border-[#c5362a]" />
      <Field label="Password:" border="border-[#c5362a]" />
      <Field label="Confirm password:" border="border-[#cfcfcf] border-t-[#b3b3b3]" error={false} />
      <div className="-mt-[2px]">
        <Field label="Status:" border="border-[#c5362a]">
          <span className="pt-[2px] pl-[12px] text-[24px] tracking-[-0.15px] text-[#666]">Select status</span>
          <span className="mr-[14px] border-x-8 border-t-9 border-x-transparent border-t-[#8c8c8c]" />
        </Field>
      </div>
    </div>
  );
}

function Main() {
  return (
    <main className="flex w-[2356px] flex-col bg-[#f0f0f0] text-[#262626]">
      <div className="flex h-[106px] shrink-0 items-start border-b-2 border-[#d4d4d4] bg-white whitespace-nowrap">
        <UsersIcon className="mt-[20px] ml-[22px] h-[62px] w-[60px]" />
        <span className="ml-[13px] text-[48px] leading-[102px] font-bold tracking-[-0.9px] text-[#0a54b3]">Users</span>
        <svg viewBox="0 0 12 28" className="mt-[37px] ml-[26px] h-7 w-3">
          <path d="M10.500 1 1.500 26" stroke="#262626" strokeWidth="2" />
        </svg>
        <UserIcon className="mt-[38px] ml-[31px] h-[30px] w-[22px]" />
        <span className="ml-[17px] text-[33.5px] leading-[108px] tracking-[-0.1px]">Create User</span>
      </div>
      <div className="flex min-h-0 flex-1 flex-col pt-6 pl-6">
        <CreateUserForm />
      </div>
    </main>
  );
}

export default function App() {
  return (
    <div className="h-[1852px] w-[3064px] overflow-hidden bg-white pt-[76px] pl-[112px] font-[Inter,sans-serif]">
      <div className="relative flex h-[1628px] w-[2840px] flex-col overflow-hidden rounded-[10px] bg-[#333] shadow-[0_0_0_1px_#000,0_34px_74px_rgba(0,0,0,0.69)]">
        <TabStrip />
        <Toolbar />
        <BookmarksBar />
        <div className="h-[34px] shrink-0 bg-[#4c4c4c] pl-px text-[22px] leading-[32px] text-[#262626]">a</div>
        <AppHeader />
        <div className="flex h-[1202px] shrink-0 overflow-hidden">
          <Sidebar />
          <Main />
        </div>
        <footer className="flex h-[70px] shrink-0 items-start justify-between bg-[#333] pr-1 text-[22px] whitespace-nowrap">
          <span className="pt-[34px] pl-px leading-[36px] text-[#262626]">a</span>
          <span className="leading-[36px] tracking-[-0.02px] text-[#b8b8b8]">Copyright © 2008-present, Sonatype Inc. All rights reserved.</span>
        </footer>
        <div className="pointer-events-none absolute inset-0 rounded-[10px] border-2 border-white/20" />
      </div>
    </div>
  );
}
